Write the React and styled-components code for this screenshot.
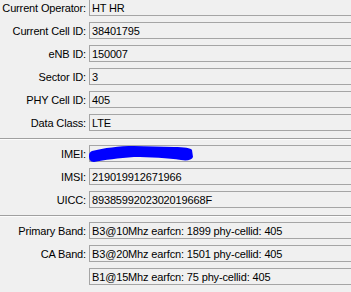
import styled, { createGlobalStyle } from "styled-components";

const GlobalStyle = createGlobalStyle`
  html, body {
    margin: 0;
    padding: 0;
    background: #f0f0f0;
    overflow: hidden;
  }
  body {
    font-family: "Liberation Sans", Arial, sans-serif;
    font-size: 11px;
    letter-spacing: -0.15px;
    color: #000;
  }
`;

const Page = styled.div`
  width: 351px;
  height: 292px;
  overflow: hidden;
  display: flex;
  flex-direction: column;
  margin-top: -1px;
`;

const Section = styled.div`
  display: flex;
  flex-direction: column;
  gap: 6px;
`;

const Divider = styled.div`
  height: 1px;
  margin: 7px 0 5px;
  background: #a0a0a0;
  border-bottom: 1px solid #fcfcfc;
  flex-shrink: 0;
`;

const Row = styled.div`
  display: grid;
  grid-template-columns: 86px 300px;
  column-gap: 3px;
  height: 17px;
  flex-shrink: 0;
`;

const Label = styled.div`
  text-align: right;
  white-space: nowrap;
  line-height: 17px;
  padding-top: 1px;
`;

const Field = styled.div`
  position: relative;
  box-sizing: border-box;
  height: 17px;
  border: 1px solid #a5a5a5;
  background: #f0f0f0;
  padding: 1px 0 0 2px;
  line-height: 15px;
  white-space: nowrap;
`;

const Scribble = styled.svg`
  position: absolute;
  left: -1px;
  top: -1px;
  overflow: visible;
`;

function InfoRow({ label, value, children }) {
  return (
    <Row>
      <Label>{label ? `${label}:` : ""}</Label>
      <Field>
        {value}
        {children}
      </Field>
    </Row>
  );
}

export default function App() {
  return (
    <>
      <GlobalStyle />
      <Page>
        <Section>
          <InfoRow label="Current Operator" value="HT HR" />
          <InfoRow label="Current Cell ID" value="38401795" />
          <InfoRow label="eNB ID" value="150007" />
          <InfoRow label="Sector ID" value="3" />
          <InfoRow label="PHY Cell ID" value="405" />
          <InfoRow label="Data Class" value="LTE" />
        </Section>
        <Divider />
        <Section>
          <InfoRow label="IMEI">
            <Scribble width="106" height="18" viewBox="0 0 106 18">
              <path
                fill="#0000ff"
                d="M 3 6 C 15 3, 30 1, 45 1 L 85 2 C 95 2, 102 3, 103 5 L 104 12 C 103 15, 98 16, 92 15 C 80 13, 60 12, 45 12 C 30 13, 15 15, 5 17 C 1 17, 0 14, 0 11 C 0 8, 1 7, 3 6 Z"
              />
            </Scribble>
          </InfoRow>
          <InfoRow label="IMSI" value="219019912671966" />
          <InfoRow label="UICC" value="8938599202302019668F" />
        </Section>
        <Divider />
        <Section>
          <InfoRow label="Primary Band" value="B3@10Mhz earfcn: 1899 phy-cellid: 405" />
          <InfoRow label="CA Band" value="B3@20Mhz earfcn: 1501 phy-cellid: 405" />
          <InfoRow value="B1@15Mhz earfcn: 75 phy-cellid: 405" />
          <InfoRow value="" />
        </Section>
      </Page>
    </>
  );
}
